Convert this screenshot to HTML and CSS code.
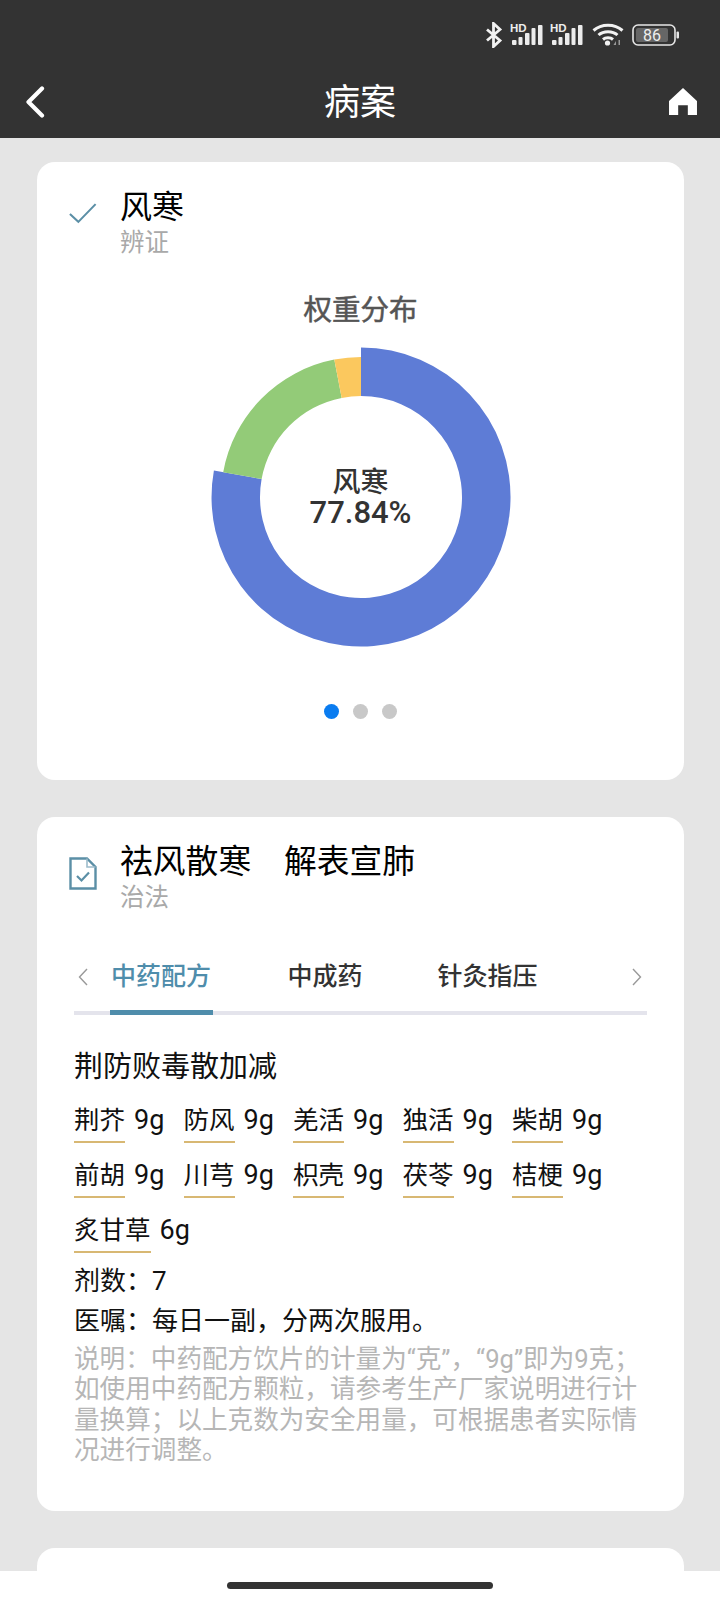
FILE: index.html
```html
<!DOCTYPE html>
<html lang="zh">
<head>
<meta charset="utf-8">
<title>病案</title>
<link rel="stylesheet" href="styles.css">
</head>
<body>
<div class="page">
  <header class="topbar">
    <div class="status">
      <svg class="st-bt" width="18" height="26" viewBox="0 0 18 26"><path d="M2 7.500 15 18.500 8.500 24.500V1.500L15 7.500 2 18.500" fill="none" stroke="#f2f2f2" stroke-width="2.800"/></svg>
      <svg class="st-sig" width="34" height="24" viewBox="0 0 34 24"><text x="0" y="10" class="hd">HD</text><g fill="#ececec"><rect x="2" y="18" width="4.500" height="5" rx="1"/><rect x="8.500" y="15" width="4" height="8" rx="1"/><rect x="15" y="11" width="4.500" height="12" rx="1"/><rect x="21.500" y="6" width="4" height="17" rx="1"/><rect x="28" y="3" width="4.500" height="20" rx="1"/></g></svg>
      <svg class="st-sig" width="34" height="24" viewBox="0 0 34 24"><text x="0" y="10" class="hd">HD</text><g fill="#ececec"><rect x="2" y="18" width="4.500" height="5" rx="1"/><rect x="8.500" y="15" width="4" height="8" rx="1"/><rect x="15" y="11" width="4.500" height="12" rx="1"/><rect x="21.500" y="6" width="4" height="17" rx="1"/><rect x="28" y="3" width="4.500" height="20" rx="1"/></g></svg>
      <svg class="st-wifi" width="32" height="24" viewBox="0 0 32 24"><g fill="none" stroke="#f2f2f2" stroke-width="3"><path d="M1.500 8.500C9.500 1.500 22.500 1.500 30.500 8.500"/><path d="M6.500 13C11.500 8.500 20.500 8.500 25.500 13"/><path d="M11 17.500C13.500 15.300 18.500 15.300 21 17.500"/></g><circle cx="15.500" cy="21" r="2.600" fill="#f2f2f2"/><path d="M24 23v-4l-2.500 4zM26.500 18h1.500v5h-1.500z" fill="#999"/></svg>
      <svg class="st-bat" width="47" height="22" viewBox="0 0 47 22"><rect x="1" y="1" width="42" height="20" rx="5" fill="none" stroke="#e6e6e6" stroke-width="1.600"/><rect x="4" y="4" width="32" height="14" rx="2" fill="#666"/><rect x="44.500" y="7.500" width="2.500" height="7" rx="1" fill="#e6e6e6"/><text x="20" y="17" class="batnum">86</text></svg>
    </div>
    <nav class="nav">
      <svg class="nav-back" width="20" height="32" viewBox="0 0 20 32"><path d="M17 2.500 3.500 16 17 29.500" fill="none" stroke="#fff" stroke-width="4.200" stroke-linecap="round" stroke-linejoin="round"/></svg>
      <h1 class="nav-title">病案</h1>
      <svg class="nav-home" width="28" height="27" viewBox="0 0 29 28"><path d="M14.500 0 29 13.500V28H19.500V18H9.500V28H0V13.500Z" fill="#fff"/></svg>
    </nav>
  </header>

  <main class="content">
    <section class="card card-one">
      <div class="head">
        <svg class="head-icon" width="30" height="22" viewBox="0 0 30 22"><path d="M1 12 10 20.500 28.500 1.500" fill="none" stroke="#5b8fa6" stroke-width="2.200"/></svg>
        <div>
          <div class="head-title head-title-short">风寒</div>
          <div class="head-sub">辨证</div>
        </div>
      </div>
      <h2 class="chart-title">权重分布</h2>
      <div class="donut">
        <svg width="300" height="300" viewBox="-150 -150 300 300">
          <path fill="#5e7cd6" d="M0-149.500A149.500 149.500 0 1 1-147.100-26.500L-99.400-17.900A101 101 0 1 0 0-101Z"/>
          <path fill="#93cb78" d="M-137.800-24.800A140 140 0 0 1-26.700-137.400L-19.300-99.100A101 101 0 0 0-99.400-17.900Z"/>
          <path fill="#fbc85e" d="M-26.700-137.400A140 140 0 0 1 0-140V-101A101 101 0 0 0-19.300-99.100Z"/>
        </svg>
        <div class="donut-label">
          <div class="donut-name">风寒</div>
          <div class="donut-val">77.84%</div>
        </div>
      </div>
      <div class="dots"><span class="dot dot-on"></span><span class="dot"></span><span class="dot"></span></div>
    </section>

    <section class="card card-two">
      <div class="head">
        <svg class="head-icon" width="28" height="33" viewBox="0 0 28 33"><path d="M1.500 1.500H18L26.500 10V31.500H1.500Z" fill="none" stroke="#5b8fa6" stroke-width="2.400"/><path d="M18 1.500V10H26.500" fill="none" stroke="#9dbccb" stroke-width="1.600"/><path d="M8 19 12.500 23.500 20 15.500" fill="none" stroke="#5b8fa6" stroke-width="2.200"/></svg>
        <div>
          <div class="head-title">祛风散寒　解表宣肺</div>
          <div class="head-sub">治法</div>
        </div>
      </div>

      <div class="tabs">
        <svg class="tab-arrow" width="10" height="18" viewBox="0 0 10 18"><path d="M9 1 1.500 9 9 17" fill="none" stroke="#999" stroke-width="1.400"/></svg>
        <span class="tab tab-on">中药配方</span>
        <span class="tab">中成药</span>
        <span class="tab">针灸指压</span>
        <svg class="tab-arrow tab-arrow-r" width="10" height="18" viewBox="0 0 10 18"><path d="M1 1 8.500 9 1 17" fill="none" stroke="#999" stroke-width="1.400"/></svg>
      </div>

      <div class="rx">
        <h3 class="rx-title">荆防败毒散加减</h3>
        <div class="herbs">
          <div class="herb"><span class="herb-name">荆芥</span><span class="herb-dose">9g</span></div>
          <div class="herb"><span class="herb-name">防风</span><span class="herb-dose">9g</span></div>
          <div class="herb"><span class="herb-name">羌活</span><span class="herb-dose">9g</span></div>
          <div class="herb"><span class="herb-name">独活</span><span class="herb-dose">9g</span></div>
          <div class="herb"><span class="herb-name">柴胡</span><span class="herb-dose">9g</span></div>
          <div class="herb"><span class="herb-name">前胡</span><span class="herb-dose">9g</span></div>
          <div class="herb"><span class="herb-name">川芎</span><span class="herb-dose">9g</span></div>
          <div class="herb"><span class="herb-name">枳壳</span><span class="herb-dose">9g</span></div>
          <div class="herb"><span class="herb-name">茯苓</span><span class="herb-dose">9g</span></div>
          <div class="herb"><span class="herb-name">桔梗</span><span class="herb-dose">9g</span></div>
          <div class="herb herb-wide"><span class="herb-name">炙甘草</span><span class="herb-dose">6g</span></div>
        </div>
        <p class="line line-first">剂数：7</p>
        <p class="line">医嘱：每日一副，分两次服用。</p>
        <p class="note">说明：中药配方饮片的计量为“克”，“9g”即为9克；如使用中药配方颗粒，请参考生产厂家说明进行计量换算；以上克数为安全用量，可根据患者实际情况进行调整。</p>
      </div>
    </section>

    <section class="card card-three"></section>
  </main>

  <div class="homebar"><span class="homebar-pill"></span></div>
</div>
</body>
</html>
```

FILE: styles.css
```css
* { box-sizing: border-box; }
html, body { margin: 0; padding: 0; }
body {
  font-family: Roboto, "Noto Sans CJK SC", sans-serif;
  background: #e5e5e5;
  color: #000;
}
h1, h2, h3, p { margin: 0; font-weight: 400; }

.page {
  position: relative;
  width: 720px;
  height: 1600px;
  overflow: hidden;
  background: #e5e5e5;
}

.topbar { height: 138px; background: #333; color: #fff; }
.status {
  height: 68px;
  padding: 22px 41px 0 0;
  display: flex;
  justify-content: flex-end;
  align-items: flex-start;
}
.st-bt { margin-right: 7px; }
.st-sig + .st-sig { margin-left: 6px; }
.st-wifi { margin: 0 8px 0 8px; }
.st-bat { margin-top: 2px; }
.hd { font: 700 11.500px "Liberation Sans", sans-serif; fill: #ececec; }
.batnum { font: 400 16px Roboto, sans-serif; fill: #eee; text-anchor: middle; }

.nav {
  height: 70px;
  padding: 0 22px;
  display: grid;
  grid-template-columns: 1fr auto 1fr;
  align-items: center;
}
.nav-title { font-size: 36px; line-height: 48px; color: #fff; }
.nav-back { justify-self: start; margin: -3px 0 0 3px; }
.nav-home { justify-self: end; margin: -3px 1px 0 0; }

.content { padding: 24px 36px 0 37px; }
.card { background: #fff; border-radius: 18px; }
.card-one { height: 618px; padding-top: 25px; }
.card-two { margin-top: 37px; height: 694px; padding-top: 25px; }
.card-three { margin-top: 37px; height: 100px; }

.head { display: flex; padding-left: 32px; }
.head-icon { width: 51px; flex: none; padding-right: 23px; margin-top: 15px; }
.head-title { font-size: 32.800px; line-height: 41px; color: #000; }
.head-title-short { font-size: 32px; }
.head-sub { font-size: 24.500px; line-height: 30px; color: #a9a9a9; }

.chart-title {
  margin-top: 35px;
  font-size: 28.500px;
  line-height: 36px;
  font-weight: 400;
  color: #555;
  text-align: center;
  -webkit-text-stroke: 0.500px #555;
}
.donut {
  position: relative;
  width: 300px;
  height: 300px;
  margin: 18px auto 0;
}
.donut svg { display: block; }
.donut-label {
  position: absolute;
  left: 0;
  right: 0;
  top: 121px;
  text-align: center;
  color: #333;
  font-weight: 500;
  line-height: 30px;
}
.donut-name { font-size: 28px; }
.donut-val { font-size: 31px; }

.dots { margin-top: 57px; display: flex; justify-content: center; gap: 14px; }
.dot { width: 15px; height: 15px; border-radius: 50%; background: #c8c8c8; }
.dot-on { background: #0a7cf0; }

.tabs {
  position: relative;
  margin: 39px 37px 0;
  height: 63px;
  padding-bottom: 9px;
  border-bottom: 4px solid #e4e4ec;
  display: flex;
  align-items: center;
  gap: 75px;
}
.tab-arrow { position: absolute; left: 4px; top: 16px; }
.tab-arrow-r { left: auto; right: 5px; }
.tab {
  position: relative;
  font-size: 25px;
  line-height: 50px;
  font-weight: 500;
  color: #333;
}
.tab:first-of-type { margin-left: 36px; padding: 0 1.500px 0 1px; }
.tab-on { color: #4f8dab; }
.tab-on::after {
  content: "";
  position: absolute;
  left: 0;
  right: 0;
  bottom: -13px;
  height: 5px;
  background: #4f8dab;
}

.rx { padding: 32px 37px 0; }
.rx-title { font-size: 29px; line-height: 40px; color: #111; }
.herbs {
  margin-top: 15px;
  display: grid;
  grid-template-columns: repeat(5, 109.500px);
  row-gap: 14px;
  font-size: 25.500px;
  line-height: 36px;
  color: #111;
}
.herb { display: flex; align-items: flex-start; gap: 9px; white-space: nowrap; }
.herb-name { padding-bottom: 3px; border-bottom: 2px solid #d8b873; }
.herb-dose { font-size: 27px; }
.line { font-size: 26px; line-height: 40px; color: #111; }
.line-first { margin-top: 8px; }
.note {
  margin-top: 3px;
  font-size: 25.600px;
  line-height: 30.400px;
  color: #b6b6b6;
}

.homebar {
  position: absolute;
  left: 0;
  right: 0;
  bottom: 0;
  height: 29px;
  background: #fff;
  display: flex;
  justify-content: center;
  padding-top: 11px;
}
.homebar-pill { width: 266px; height: 7px; border-radius: 4px; background: #333; }
```
